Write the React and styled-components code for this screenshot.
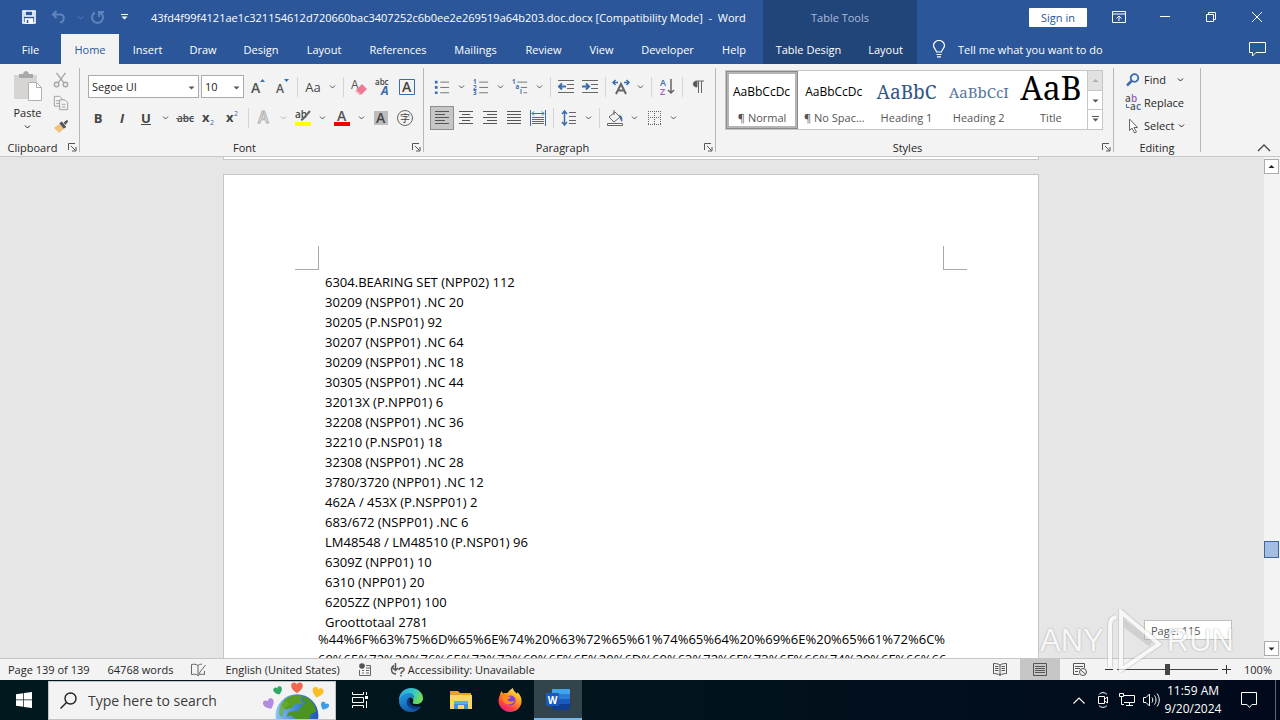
import React from 'react';
import styled, { createGlobalStyle } from 'styled-components';

const GlobalStyle = createGlobalStyle`
    * {
        box-sizing: border-box;
    }
    body {
        margin: 0;
        font-family: "Open Sans", "Noto Sans", sans-serif;
        font-size: 12px;
        color: #262626;
        overflow: hidden;
    }
    button, input, select {
        font: inherit;
        color: inherit;
        margin: 0;
        padding: 0;
        border: 0;
        background: none;
        border-radius: 0;
    }
    svg {
        display: block;
        flex: none;
    }
`;

const Window = styled.div`
    position: relative;
    height: 100vh;
    display: flex;
    flex-direction: column;
    overflow: hidden;
`;

/* header */

const Header = styled.header`
    display: flex;
    background-color: #2b579a;
    color: white;
    white-space: nowrap;
`;

const HeaderPart = styled.div`
    flex: ${(p) => (p.$grow ? '1' : 'none')};
    background-color: ${(p) => (p.$dark ? '#224579' : 'transparent')};
`;

const TitleRow = styled.div`
    height: 34px;
    display: flex;
    align-items: center;
    justify-content: ${(p) => p.$justify || 'flex-start'};
    font-size: 11px;
    color: ${(p) => (p.$dim ? '#a9bcd9' : 'white')};
`;

const QuickAccess = styled.div`
    display: flex;
    align-items: center;
    padding-left: 17px;
    margin-right: 12px;
`;

const QuickButton = styled.button`
    width: ${(p) => p.$width || 24}px;
    height: 24px;
    display: flex;
    align-items: center;
    justify-content: center;
    color: ${(p) => (p.$off ? '#5f83bb' : 'white')};
`;

const WindowTitle = styled.h1`
    margin: 0;
    font-size: 11px;
    font-weight: 400;
`;

const TabRow = styled.div`
    height: 30px;
    display: flex;
    align-items: center;
    padding-right: ${(p) => p.$right || 0}px;
`;

const Tab = styled.button`
    width: ${(p) => p.$width}px;
    height: 30px;
    font-size: 11px;
    text-align: center;
    background-color: ${(p) => (p.$active ? '#f3f3f3' : 'transparent')};
    color: ${(p) => (p.$active ? '#2b579a' : 'white')};
`;

const SignIn = styled.button`
    width: 58px;
    height: 19px;
    margin-right: 9px;
    background-color: white;
    color: #2b579a;
    border-radius: 1px;
    line-height: 19px;
`;

const CaptionButton = styled.button`
    width: 46px;
    height: 30px;
    display: flex;
    align-items: center;
    justify-content: center;
`;

const TellMe = styled.label`
    flex: 1;
    display: flex;
    align-items: center;
    gap: 12px;
    padding-left: 15px;
`;

const TellMeInput = styled.input`
    width: 200px;
    font-size: 11px;
    outline: none;
    &::placeholder {
        color: white;
        opacity: 1;
    }
`;

/* ribbon */

const Ribbon = styled.section`
    display: flex;
    height: 93px;
    padding: 4px 0;
    background-color: #f3f3f3;
    border-bottom: 1px solid #c8c8c8;
    white-space: nowrap;
`;

const Group = styled.div`
    width: ${(p) => p.$width}px;
    display: flex;
    flex-direction: column;
    border-right: 1px solid #b8b8b8;
`;

const GroupBody = styled.div`
    flex: 1;
    display: flex;
    flex-direction: ${(p) => (p.$column ? 'column' : 'row')};
    padding: ${(p) => p.$pad || '0 6px'};
`;

const GroupFooter = styled.div`
    display: flex;
    align-items: center;
    height: 10px;
`;

const GroupName = styled.div`
    flex: 1;
    font-size: 11px;
    text-align: center;
`;

const Launcher = styled.button`
    width: 14px;
    height: 14px;
    display: flex;
    align-items: center;
    justify-content: center;
`;

const ToolRow = styled.div`
    display: flex;
    align-items: center;
    height: 31px;
    padding-left: ${(p) => p.$lead || 0}px;
`;

const Tool = styled.button`
    width: 24px;
    height: 24px;
    display: flex;
    align-items: center;
    justify-content: center;
    color: #444;
    font-size: 13px;
    background-color: ${(p) => (p.$on ? '#c6c6c6' : 'transparent')};
    border: ${(p) => (p.$on ? '1px solid #8f8f8f' : '0')};
`;

const DropButton = styled.button`
    width: 15px;
    height: 24px;
    display: flex;
    align-items: center;
    justify-content: center;
    color: ${(p) => (p.$off ? '#b5b5b5' : '#555')};
`;

const Divider = styled.span`
    width: 1px;
    height: 20px;
    margin: 0 3px;
    background-color: #d5d5d5;
`;

const Combo = styled.div`
    position: relative;
    width: ${(p) => p.$width}px;
    height: 23px;
    margin-right: 2px;
    border: 1px solid #ababab;
    background-color: white;
    color: #555;
    svg {
        position: absolute;
        right: 3px;
        top: 8px;
        pointer-events: none;
    }
`;

const ComboSelect = styled.select`
    width: 100%;
    height: 21px;
    padding-left: 3px;
    font-size: 11px;
    color: #262626;
    appearance: none;
    outline: none;
`;

const PasteButton = styled.button`
    width: 46px;
    display: flex;
    flex-direction: column;
    align-items: center;
    gap: 3px;
    padding-top: 3px;
    font-size: 11px;
`;

const IconColumn = styled.div`
    display: flex;
    flex-direction: column;
    justify-content: space-between;
    height: 70px;
`;

const Gallery = styled.div`
    flex: 1;
    display: flex;
    height: 60px;
    margin-top: 2px;
    border: 1px solid #c6c6c6;
    background-color: white;
`;

const StyleCell = styled.button`
    flex: 1;
    min-width: 0;
    display: flex;
    flex-direction: column;
    justify-content: space-between;
    overflow: hidden;
    padding: 0 2px;
    border: 3px solid ${(p) => (p.$on ? '#b5b5b5' : 'white')};
    outline: ${(p) => (p.$on ? '1px solid #8a8a8a' : '0')};
    outline-offset: -1px;
`;

const StyleSample = styled.span`
    width: 100%;
    height: 36px;
    overflow: hidden;
    padding-left: ${(p) => (p.$serif ? 0 : 2)}px;
    text-align: ${(p) => (p.$serif ? 'center' : 'left')};
    font-family: ${(p) => (p.$serif ? '"Noto Serif", "Liberation Serif", serif' : 'inherit')};
    font-size: ${(p) => p.$size}px;
    line-height: ${(p) => p.$line || 36}px;
    color: ${(p) => p.$color || 'black'};
`;

const StyleName = styled.span`
    width: 100%;
    font-size: 11px;
    line-height: 16px;
    text-align: center;
    color: #555;
`;

const GalleryScroll = styled.div`
    width: 15px;
    display: flex;
    flex-direction: column;
    border-left: 1px solid #c6c6c6;
`;

const GalleryButton = styled.button`
    flex: 1;
    display: flex;
    align-items: center;
    justify-content: center;
    background-color: ${(p) => (p.$off ? '#e1e1e1' : 'white')};
    color: ${(p) => (p.$off ? '#b0b0b0' : '#555')};
    & + & {
        border-top: 1px solid #c6c6c6;
    }
`;

const EditButton = styled.button`
    height: 23px;
    display: flex;
    align-items: center;
    gap: 3px;
    font-size: 11px;
    svg:last-child {
        margin-left: ${(p) => p.$gap || 0}px;
    }
`;

const Collapse = styled.div`
    flex: 1;
    display: flex;
    align-items: flex-end;
    justify-content: flex-end;
    padding: 0 9px 0 0;
`;

/* document */

const Workspace = styled.main`
    flex: 1;
    min-height: 0;
    display: flex;
    background-color: #e6e6e6;
`;

const Canvas = styled.div`
    flex: 1;
    overflow: hidden;
    display: flex;
    flex-direction: column;
    align-items: center;
    padding-right: 2px;
`;

const Sheet = styled.article`
    flex: none;
    width: 816px;
    min-height: ${(p) => (p.$tail ? 3 : 1056)}px;
    padding-top: ${(p) => (p.$tail ? 0 : 71)}px;
    margin-bottom: 14px;
    background-color: white;
    border: 1px solid #c6c6c6;
    border-top-width: ${(p) => (p.$tail ? 0 : 1)}px;
    color: black;
    font-size: 13px;
    line-height: 20px;
`;

const Corners = styled.div`
    display: flex;
    justify-content: space-between;
    padding: 0 71px;
`;

const Corner = styled.span`
    width: 24px;
    height: 24px;
    border-bottom: 1px solid #a8a8a8;
    border-left: ${(p) => (p.$right ? '1px solid #a8a8a8' : '0')};
    border-right: ${(p) => (p.$right ? '0' : '1px solid #a8a8a8')};
`;

const Lines = styled.div`
    padding: 2px 94px 0 101px;
    p {
        margin: 0;
    }
`;

const Encoded = styled.p`
    margin: -3px 90px 0 94px;
    white-space: pre;
`;

const ScrollBar = styled.div`
    width: 16px;
    display: flex;
    flex-direction: column;
    align-items: flex-start;
    padding: 2px 0;
    background-color: #f3f3f3;
`;

const ScrollArrow = styled.button`
    width: 15px;
    height: 15px;
    display: flex;
    align-items: center;
    justify-content: center;
    border: 1px solid #ababab;
    background-color: white;
`;

const ScrollTrack = styled.div`
    flex: 1;
    width: 15px;
    display: flex;
    flex-direction: column;
    justify-content: flex-end;
    padding-bottom: 83px;
`;

const ScrollThumb = styled.div`
    height: 17px;
    border: 1px solid #41669f;
    background-color: #a3bde3;
`;

const PageTip = styled.div`
    position: absolute;
    right: 48px;
    bottom: 80px;
    width: 88px;
    height: 20px;
    padding-left: 6px;
    border: 1px solid #c0c0c0;
    background-color: white;
    font-size: 11px;
    line-height: 19px;
    color: #555;
`;

const Watermark = styled.div`
    position: absolute;
    right: 46px;
    bottom: 45px;
    width: 194px;
    height: 68px;
    display: flex;
    align-items: center;
    justify-content: space-between;
    opacity: 0.7;
    pointer-events: none;
    font-family: "Liberation Sans", sans-serif;
    font-size: 31px;
    color: white;
    text-shadow: 0 0 2px #888;
`;

/* status bar */

const StatusBar = styled.footer`
    display: flex;
    align-items: center;
    height: 22px;
    padding: 0 8px;
    border-top: 1px solid #c6c6c6;
    background-color: #f3f3f3;
    font-size: 11px;
    white-space: nowrap;
`;

const StatusItem = styled.button`
    display: flex;
    align-items: center;
    gap: 2px;
    height: 21px;
    margin-right: 18px;
`;

const Spacer = styled.div`
    flex: 1;
`;

const ViewButton = styled.button`
    width: 40px;
    height: 21px;
    display: flex;
    align-items: center;
    justify-content: center;
    color: #555;
    background-color: ${(p) => (p.$on ? '#c6c6c6' : 'transparent')};
`;

const ZoomStep = styled.button`
    width: 17px;
    height: 21px;
    display: flex;
    align-items: center;
    justify-content: center;
`;

const ZoomRange = styled.input`
    width: 101px;
    height: 21px;
    appearance: none;
    background: linear-gradient(#444, #444) center / 100% 1px no-repeat;
    &::-webkit-slider-thumb {
        appearance: none;
        width: 5px;
        height: 11px;
        background-color: #444;
    }
`;

const ZoomValue = styled.button`
    width: 37px;
    text-align: right;
`;

/* taskbar */

const TaskBar = styled.nav`
    display: flex;
    align-items: center;
    height: 40px;
    background: linear-gradient(90deg, #02181f, #02141d 50%, #010a1c);
    color: white;
`;

const TaskButton = styled.button`
    width: ${(p) => p.$width || 49}px;
    height: 40px;
    display: flex;
    align-items: center;
    justify-content: center;
    background-color: ${(p) => (p.$on ? '#33444d' : 'transparent')};
    border-bottom: ${(p) => (p.$on ? '2px solid #76b9ed' : '0')};
`;

const SearchBox = styled.label`
    width: 288px;
    height: 39px;
    display: flex;
    align-items: center;
    gap: 11px;
    padding: 0 5px 0 11px;
    overflow: hidden;
    border: 1px solid #bfc3c4;
    background-color: #f3f3f3;
    color: #222;
`;

const SearchInput = styled.input`
    flex: 1;
    min-width: 0;
    font-size: 14px;
    outline: none;
    &::placeholder {
        color: #3c3c3c;
        opacity: 1;
    }
`;

const Clock = styled.button`
    width: 60px;
    line-height: 18px;
    text-align: center;
    white-space: nowrap;
`;

const DesktopEdge = styled.button`
    width: 5px;
    height: 40px;
    border-left: 1px solid #5f6a73;
`;

const ChevronIcon = ({ size = 7 }) => (
    <svg width={size} height={size} viewBox="0 0 7 7" fill="none" stroke="currentColor">
        <path d="M1 2.5 3.5 5 6 2.5" />
    </svg>
);

const ArrowIcon = ({ up, bar }) => (
    <svg width="7" height="7" viewBox="0 0 7 7" fill="currentColor">
        {bar && <path d="M0 0h7v1H0z" />}
        <path d={up ? 'M0.5 5 3.5 2l3 3z' : 'M0.5 2.5h6l-3 3z'} />
    </svg>
);

const Glyph = ({ size = 18, children }) => (
    <svg
        width={size}
        height={size}
        viewBox="0 0 18 18"
        fill="none"
        stroke="#666"
        fontFamily="Open Sans, sans-serif"
        overflow="visible"
    >
        {children}
    </svg>
);

const LauncherIcon = () => (
    <svg width="9" height="9" viewBox="0 0 9 9" fill="none" stroke="#555">
        <path d="M.5 7V.5H7M3 3l4.5 4.5M8 4v4H4" />
    </svg>
);

const AlignIcon = ({ widths, start = 'left' }) => (
    <svg width="14" height="13" viewBox="0 0 14 13" fill="#555">
        {widths.map((w, i) => (
            <rect
                key={i}
                x={start === 'left' ? 0 : start === 'right' ? 14 - w : (14 - w) / 2}
                y={i * 3}
                width={w}
                height="1"
            />
        ))}
    </svg>
);

const ListIcon = ({ numbered }) => (
    <Glyph size={16}>
        <path d="M7 3.5h10M7 9.5h10M7 15.5h10" />
        {numbered ? (
            <g fill="#3b6cae" stroke="none" fontSize="7" fontWeight="700">
                <text x="0" y="6">1</text>
                <text x="0" y="12">2</text>
                <text x="0" y="18">3</text>
            </g>
        ) : (
            <path d="M1 2h3v3H1zM1 8h3v3H1zM1 14h3v3H1z" fill="#3b6cae" stroke="none" />
        )}
    </Glyph>
);

const IndentIcon = ({ right }) => (
    <Glyph>
        <path d="M1 2.5h16M10 6.5h7M10 10.5h7M1 14.5h16" />
        <path
            d={right ? 'M1 8.5h7M5 5.5l3 3-3 3' : 'M2 8.5h7M5 5.5l-3 3 3 3'}
            stroke="#3b6cae"
            strokeWidth="2"
        />
    </Glyph>
);

const SaveIcon = () => (
    <svg width="16" height="16" viewBox="0 0 16 16" fill="none" stroke="white" strokeWidth="1.6">
        <path d="M2 2h12v12H2z" />
        <path d="M4 2v5h8V2" />
        <path d="M4.5 10h7v4h-7z" fill="white" />
        <path d="M6.5 11v3" stroke="#2b579a" />
    </svg>
);

const ReplaceIcon = () => (
    <svg width="16" height="18" viewBox="0 0 16 18" fontFamily="Open Sans, sans-serif" fontSize="10" fontWeight="600" overflow="visible">
        <text x="0" y="8" fill="#555">a</text>
        <text x="6" y="8" fill="#9a5fb8">b</text>
        <text x="5" y="16" fill="#555">a</text>
        <text x="11" y="16" fill="#3b6cae">c</text>
        <path d="M1.5 10v3.5h3" fill="none" stroke="#3b6cae" />
    </svg>
);

const EarthIcon = () => (
    <svg width="68" height="38" viewBox="0 0 70 38">
        <defs>
            <linearGradient id="sea" x1="0" x2="1">
                <stop offset="0" stopColor="#8cc4f8" />
                <stop offset="0.5" stopColor="#3f86dd" />
                <stop offset="1" stopColor="#2458b8" />
            </linearGradient>
            <path id="heart" d="M6 11C2 8 0 6 0 3.3 0 1 1.4 0 3 0c1.4 0 2.4.7 3 2 .6-1.3 1.6-2 3-2 1.6 0 3 1 3 3.3C12 6 10 8 6 11z" />
        </defs>
        <circle cx="36" cy="35" r="22" fill="url(#sea)" />
        <path d="M23 19c5-5 13-6 18-4l-2 4 4 3-5 2-3-2-4 5-7 2-4-4z" fill="#5a9f24" />
        <path d="M42 15c8 2 13 9 14 16l-5 2-3 6H36l-6-4-5 1 3-5 9-1 5-6 4-2-5-3z" fill="#4b9420" />
        <path d="M20 22l5-2 3 3-5 5-2 9-3-2c-1-5 0-9 2-13z" fill="#6aaf35" opacity=".7" />
        <use href="#heart" x="30" y="1" fill="#ef6950" />
        <use href="#heart" transform="translate(11 7) rotate(-18) scale(.75)" fill="#2fa866" />
        <use href="#heart" transform="translate(53 5) rotate(14) scale(.95)" fill="#fbbd24" />
        <use href="#heart" transform="translate(0 21) rotate(-25) scale(.95)" fill="#b18be0" />
        <use href="#heart" transform="translate(62 20) rotate(25) scale(.72)" fill="#3d9be8" />
    </svg>
);

const EdgeIcon = () => (
    <svg width="26" height="26" viewBox="0 0 26 26">
        <defs>
            <linearGradient id="edgeTop" x1="0" y1="0" x2="1" y2="0.4">
                <stop offset="0" stopColor="#2aa5e0" />
                <stop offset="0.6" stopColor="#37c6c8" />
                <stop offset="1" stopColor="#6fdc5c" />
            </linearGradient>
            <linearGradient id="edgeBody" x1="0" y1="0" x2="0.6" y2="1">
                <stop offset="0" stopColor="#1fa0e4" />
                <stop offset="1" stopColor="#1254a5" />
            </linearGradient>
        </defs>
        <path d="M1 13C1 6 6 1 13 1s12 5 12 10c0 4-3 6-7 6-3 0-4-1-3-2 1-2 0-5-4-5-5 0-9 3-10 3z" fill="url(#edgeTop)" />
        <path d="M1 14c1-5 5-8 10-8 4 0 6 3 5 6-1-2-3-2-5-1-4 3-1 9 4 10 3 1 6 0 8-2-2 4-6 6-10 6C6 25 1 20 1 14z" fill="url(#edgeBody)" />
        <path d="M10 12c-3 4 0 9 5 10 3 .6 6-.5 8-3-3 1-9 1-11-3-.7-1.5-.6-3 0-4.500z" fill="#0c3c85" />
    </svg>
);

const FolderIcon = () => (
    <svg width="22" height="20" viewBox="0 0 22 20">
        <path d="M0 1h8l2 2h11v5H0z" fill="#e8a020" />
        <path d="M0 5h22v14H0z" fill="#fbd667" />
        <path d="M4 11h14v8h-4v-4H8v4H4z" fill="#3d93d2" />
        <path d="M4 11h14v3H4z" fill="#5ab0e6" />
    </svg>
);

const FirefoxIcon = () => (
    <svg width="24" height="24" viewBox="0 0 24 24">
        <defs>
            <linearGradient id="fire" x1="0.8" y1="0" x2="0.2" y2="1">
                <stop offset="0" stopColor="#fff04a" />
                <stop offset="0.4" stopColor="#ff9a1f" />
                <stop offset="0.75" stopColor="#ff3c4b" />
                <stop offset="1" stopColor="#e31587" />
            </linearGradient>
        </defs>
        <path d="M2 7c0-2 1-3 2-4 0 1 .5 2 1.5 2.5C7 5 8 5 9 5.3 11 3 13 1 15 0c0 3 3 4 4 6l.5-2C22 7 24 10 23.5 14 23 20 18 24 12 24S.5 19 .5 13C.5 10.5 1 9 2 7z" fill="url(#fire)" />
        <circle cx="12.5" cy="12.5" r="5" fill="#7b3fe0" />
        <path d="M5 8c2-1 4-1 5 .5 2 0 3 0 3 1-1 1-2.500 1-3.500 2 1 2 4 3 7 1-1 4-6 5-9 3-3-2-4-5-2.500-7.500z" fill="#ff8a1c" />
    </svg>
);

const WordIcon = () => (
    <svg width="24" height="21" viewBox="0 0 24 21">
        <path d="M6 0h17a1 1 0 0 1 1 1v5H6z" fill="#41a5ee" />
        <path d="M6 5h18v6H6z" fill="#2b7cd3" />
        <path d="M6 10h18v5H6z" fill="#185abd" />
        <path d="M6 15h18v5a1 1 0 0 1-1 1H7a1 1 0 0 1-1-1z" fill="#103f91" />
        <rect y="4" width="13" height="13" rx="1" fill="#185abd" />
        <text x="6.5" y="14.5" fill="white" fontSize="10" fontWeight="700" textAnchor="middle" fontFamily="Open Sans, sans-serif">W</text>
    </svg>
);

const tabs = [
    ['File', 61],
    ['Home', 58],
    ['Insert', 57],
    ['Draw', 54],
    ['Design', 62],
    ['Layout', 64],
    ['References', 84],
    ['Mailings', 71],
    ['Review', 65],
    ['View', 51],
    ['Developer', 81],
    ['Help', 52],
];

const styleCells = [
    { name: '¶ Normal', sample: 'AaBbCcDc', size: 12, on: true },
    { name: '¶ No Spac...', sample: 'AaBbCcDc', size: 12 },
    { name: 'Heading 1', sample: 'AaBbC', size: 19, serif: true, color: '#2f5586' },
    { name: 'Heading 2', sample: 'AaBbCcI', size: 15, serif: true, color: '#54749c' },
    { name: 'Title', sample: 'AaB', size: 32, serif: true, line: 28 },
];

const bearings = [
    '6304.BEARING SET (NPP02) 112',
    '30209 (NSPP01) .NC 20',
    '30205 (P.NSP01) 92',
    '30207 (NSPP01) .NC 64',
    '30209 (NSPP01) .NC 18',
    '30305 (NSPP01) .NC 44',
    '32013X (P.NPP01) 6',
    '32208 (NSPP01) .NC 36',
    '32210 (P.NSP01) 18',
    '32308 (NSPP01) .NC 28',
    '3780/3720 (NPP01) .NC 12',
    '462A / 453X (P.NSPP01) 2',
    '683/672 (NSPP01) .NC 6',
    'LM48548 / LM48510 (P.NSP01) 96',
    '6309Z (NPP01) 10',
    '6310 (NPP01) 20',
    '6205ZZ (NPP01) 100',
    'Groottotaal 2781',
];

function TopHeader() {
    return (
        <Header>
            <HeaderPart>
                <TitleRow>
                    <QuickAccess>
                        <QuickButton aria-label="Save"><SaveIcon /></QuickButton>
                        <QuickButton aria-label="Undo" $width={34} $off>
                            <svg width="15" height="14" viewBox="0 0 15 14" fill="none" stroke="currentColor" strokeWidth="2">
                                <path d="M5.5 1 2 4.500 5.500 8M2 4.500h7c5 0 5 7 0 8" />
                            </svg>
                        </QuickButton>
                        <QuickButton aria-label="Undo list" $width={10} $off><ChevronIcon /></QuickButton>
                        <QuickButton aria-label="Redo" $width={24} $off>
                            <svg width="15" height="15" viewBox="0 0 15 15" fill="none" stroke="currentColor" strokeWidth="2">
                                <path d="M5 2.500a5.500 5.500 0 1 0 5 0M9 7V2h5" />
                            </svg>
                        </QuickButton>
                        <QuickButton aria-label="Customize" $width={30}><ArrowIcon bar /></QuickButton>
                    </QuickAccess>
                    <WindowTitle>
                        43fd4f99f4121ae1c321154612d720660bac3407252c6b0ee2e269519a64b203.doc.docx [Compatibility Mode]&nbsp; -&nbsp; Word
                    </WindowTitle>
                </TitleRow>
                <TabRow $right={3}>
                    {tabs.map(([name, width]) => (
                        <Tab key={name} $width={width} $active={name === 'Home'}>{name}</Tab>
                    ))}
                </TabRow>
            </HeaderPart>
            <HeaderPart $dark>
                <TitleRow $justify="center" $dim>Table Tools</TitleRow>
                <TabRow>
                    <Tab $width={91}>Table Design</Tab>
                    <Tab $width={63}>Layout</Tab>
                </TabRow>
            </HeaderPart>
            <HeaderPart $grow>
                <TitleRow $justify="flex-end">
                    <SignIn>Sign in</SignIn>
                    <CaptionButton aria-label="Ribbon display options">
                        <svg width="14" height="12" viewBox="0 0 14 12" fill="none" stroke="white">
                            <path d="M.5.5h13v11H.5zM.5 3h13M7 10V5M4.500 7.500 7 5l2.500 2.500" />
                        </svg>
                    </CaptionButton>
                    <CaptionButton aria-label="Minimize">
                        <svg width="10" height="10" viewBox="0 0 10 10" stroke="white"><path d="M0 4.500h10" /></svg>
                    </CaptionButton>
                    <CaptionButton aria-label="Restore">
                        <svg width="10" height="10" viewBox="0 0 10 10" fill="none" stroke="white">
                            <path d="M.5 2.500h7v7h-7zM2.500 2.500v-2h7v7h-2" />
                        </svg>
                    </CaptionButton>
                    <CaptionButton aria-label="Close">
                        <svg width="10" height="10" viewBox="0 0 10 10" stroke="white"><path d="M0 0l10 10M10 0 0 10" /></svg>
                    </CaptionButton>
                </TitleRow>
                <TabRow>
                    <TellMe>
                        <svg width="14" height="18" viewBox="0 0 14 18" fill="none" stroke="white" strokeWidth="1.2">
                            <path d="M4.500 12c0-2-3-3.500-3-6.500a5.500 5 0 0 1 11 0c0 3-3 4.500-3 6.500zM4.500 14.500h5M5 16.800h4" />
                        </svg>
                        <TellMeInput aria-label="Tell me" placeholder="Tell me what you want to do" />
                    </TellMe>
                    <CaptionButton aria-label="Comments">
                        <svg width="17" height="15" viewBox="0 0 17 15" fill="none" stroke="white">
                            <path d="M.5.5h16v10H7L3.500 14v-3.500h-3z" />
                        </svg>
                    </CaptionButton>
                </TabRow>
            </HeaderPart>
        </Header>
    );
}

function Footer({ name, launcher = true }) {
    return (
        <GroupFooter>
            <GroupName>{name}</GroupName>
            {launcher && <Launcher aria-label={name + ' settings'}><LauncherIcon /></Launcher>}
        </GroupFooter>
    );
}

function Drop({ off }) {
    return <DropButton aria-label="More" $off={off}><ChevronIcon /></DropButton>;
}

function ClipboardGroup() {
    return (
        <Group $width={80}>
            <GroupBody>
                <PasteButton>
                    <svg width="30" height="31" viewBox="0 0 30 31">
                        <path d="M1 4h23v24H1z" fill="#d8d4d4" />
                        <path d="M6 3h4c1-4 5-4 6 0h4v4H6z" fill="#a8a8a8" />
                        <path d="M15.500 11.500h8l5 5v13h-13z" fill="white" stroke="#b0b0b0" />
                        <path d="M23.500 11.500v5h5" fill="none" stroke="#b0b0b0" />
                    </svg>
                    Paste
                    <ChevronIcon />
                </PasteButton>
                <IconColumn>
                    <Tool aria-label="Cut">
                        <Glyph size={16}>
                            <g stroke="#a6a6a6" strokeWidth="1.6">
                                <path d="M4 1l8 11M14 1 6 12" />
                                <circle cx="4" cy="14" r="2.5" />
                                <circle cx="14" cy="14" r="2.5" />
                            </g>
                        </Glyph>
                    </Tool>
                    <Tool aria-label="Copy">
                        <Glyph size={16}>
                            <path d="M1.500 1.500h6l3 3v8h-9zM3.500 6.500h4M3.500 9.500h4" stroke="#999" />
                            <path d="M7.500 5.500h6l3 3v8h-9z" fill="#f3f3f3" stroke="#999" />
                            <path d="M10 10.500h4M10 13.500h4" stroke="#999" />
                        </Glyph>
                    </Tool>
                    <Tool aria-label="Format painter">
                        <Glyph size={16}>
                            <path d="M1 11l6-4 5 5-5 5z" fill="#f0c27a" stroke="none" />
                            <path d="M7 6l5 6 3-2-5-6zM12 5l4-3 1 2-3 4z" fill="#555" stroke="none" />
                        </Glyph>
                    </Tool>
                </IconColumn>
            </GroupBody>
            <Footer name="Clipboard" />
        </Group>
    );
}

function FontGroup() {
    return (
        <Group $width={344}>
            <GroupBody $column $pad="3px 0 0 6px">
                <ToolRow $lead={2}>
                    <Combo $width={111}>
                        <ComboSelect aria-label="Font" defaultValue="Segoe UI"><option>Segoe UI</option></ComboSelect>
                        <ArrowIcon />
                    </Combo>
                    <Combo $width={43}>
                        <ComboSelect aria-label="Font size" defaultValue="10"><option>10</option></ComboSelect>
                        <ArrowIcon />
                    </Combo>
                    <Tool aria-label="Grow font">
                        <Glyph>
                            <text x="2" y="15" fontSize="14" fontWeight="600" fill="#555" stroke="none">A</text>
                            <path d="M11 4l2.500-3L16 4z" fill="#3b6cae" stroke="none" />
                        </Glyph>
                    </Tool>
                    <Tool aria-label="Shrink font">
                        <Glyph>
                            <text x="3" y="15" fontSize="12" fontWeight="600" fill="#555" stroke="none">A</text>
                            <path d="M11 1l2.500 3L16 1z" fill="#3b6cae" stroke="none" />
                        </Glyph>
                    </Tool>
                    <Divider />
                    <Tool>Aa</Tool>
                    <Drop />
                    <Divider />
                    <Tool aria-label="Clear formatting">
                        <Glyph>
                            <text x="1" y="11" fontSize="12" fill="#555" stroke="none">A</text>
                            <path d="M6 12l6-6 5 5-6 6z" fill="#ee7a95" stroke="none" />
                            <path d="M6 12l5 5-2 0-4-4z" fill="#f6b6c4" stroke="none" />
                        </Glyph>
                    </Tool>
                    <Tool aria-label="Phonetic guide">
                        <Glyph>
                            <text x="1" y="7" fontSize="8" fontWeight="600" fill="#444" stroke="none">abc</text>
                            <text x="7" y="17" fontSize="12" fontWeight="700" fontStyle="italic" fill="#3b6cae" stroke="none">A</text>
                        </Glyph>
                    </Tool>
                    <Tool aria-label="Character border">
                        <Glyph>
                            <path d="M1.500 1.500h15v15h-15z" stroke="#3b6cae" />
                            <text x="4" y="14" fontSize="14" fontWeight="600" fill="#444" stroke="none">A</text>
                        </Glyph>
                    </Tool>
                </ToolRow>
                <ToolRow>
                    <Tool><b>B</b></Tool>
                    <Tool><b><i>I</i></b></Tool>
                    <Tool><b><u>U</u></b></Tool>
                    <Drop />
                    <Tool aria-label="Strikethrough">
                        <Glyph>
                            <text x="1" y="13" fontSize="10" fontWeight="600" fill="#444" stroke="none">abc</text>
                            <path d="M0 9.500h18" />
                        </Glyph>
                    </Tool>
                    <Tool aria-label="Subscript">
                        <Glyph>
                            <text x="2" y="13" fontSize="13" fontWeight="700" fill="#444" stroke="none">x</text>
                            <text x="10" y="16" fontSize="7" fill="#3b6cae" stroke="none">2</text>
                        </Glyph>
                    </Tool>
                    <Tool aria-label="Superscript">
                        <Glyph>
                            <text x="2" y="13" fontSize="13" fontWeight="700" fill="#444" stroke="none">x</text>
                            <text x="10" y="7" fontSize="7" fill="#3b6cae" stroke="none">2</text>
                        </Glyph>
                    </Tool>
                    <Divider />
                    <Tool aria-label="Text effects">
                        <Glyph>
                            <text x="3" y="14" fontSize="16" fontWeight="600" fill="#f3f3f3" stroke="#b0b0b0">A</text>
                        </Glyph>
                    </Tool>
                    <Drop off />
                    <Tool aria-label="Highlight">
                        <Glyph>
                            <text x="1" y="9" fontSize="10" fontWeight="600" fill="#444" stroke="none">ab</text>
                            <path d="M16 2 9 10l-2 1" strokeWidth="2" />
                            <path d="M1 13h16v4H1z" fill="#ffff00" stroke="none" />
                        </Glyph>
                    </Tool>
                    <Drop />
                    <Tool aria-label="Font color">
                        <Glyph>
                            <text x="4" y="12" fontSize="14" fontWeight="600" fill="#555" stroke="none">A</text>
                            <path d="M1 13h16v4H1z" fill="#f00000" stroke="none" />
                        </Glyph>
                    </Tool>
                    <Drop />
                    <Tool aria-label="Character shading">
                        <Glyph>
                            <path d="M2 2h14v14H2z" fill="#bdbdbd" stroke="none" />
                            <text x="4" y="14" fontSize="14" fontWeight="600" fill="#444" stroke="none">A</text>
                        </Glyph>
                    </Tool>
                    <Tool aria-label="Enclose characters">
                        <Glyph>
                            <circle cx="9" cy="9" r="7.5" />
                            <text x="4" y="13" fontSize="10" fill="#444" stroke="none" fontFamily="Noto Sans CJK JP, sans-serif">字</text>
                        </Glyph>
                    </Tool>
                </ToolRow>
            </GroupBody>
            <Footer name="Font" />
        </Group>
    );
}

function ParagraphGroup() {
    return (
        <Group $width={292}>
            <GroupBody $column $pad="3px 0 0 6px">
                <ToolRow>
                    <Tool aria-label="Bullets"><ListIcon /></Tool>
                    <Drop />
                    <Tool aria-label="Numbering"><ListIcon numbered /></Tool>
                    <Drop />
                    <Tool aria-label="Multilevel list">
                        <Glyph size={16}>
                            <g fill="#3b6cae" stroke="none" fontSize="7" fontWeight="700">
                                <text x="0" y="6">1</text>
                                <text x="4" y="11">a</text>
                                <text x="9" y="17">i</text>
                            </g>
                            <path d="M6 3.500h11M10 9.500h7M13 15.500h4" />
                        </Glyph>
                    </Tool>
                    <Drop />
                    <Divider />
                    <Tool aria-label="Decrease indent"><IndentIcon /></Tool>
                    <Tool aria-label="Increase indent"><IndentIcon right /></Tool>
                    <Divider />
                    <Tool aria-label="Asian layout">
                        <Glyph>
                            <path d="M4 16 9 6l5 10M6 12.500h6" strokeWidth="2" />
                            <path d="M1 4.500h5M12 4.500h5M3.500 2 1 4.500 3.500 7M14.500 2 17 4.500 14.500 7" stroke="#3b6cae" strokeWidth="1.5" />
                        </Glyph>
                    </Tool>
                    <Drop />
                    <Divider />
                    <Tool aria-label="Sort">
                        <Glyph>
                            <text x="2" y="8" fontSize="9" fontWeight="600" fill="#3b6cae" stroke="none">A</text>
                            <text x="2" y="17" fontSize="9" fontWeight="600" fill="#9a5fb8" stroke="none">Z</text>
                            <path d="M13 1v14M10 12l3 3 3-3" strokeWidth="1.5" />
                        </Glyph>
                    </Tool>
                    <Divider />
                    <Tool aria-label="Show marks">
                        <Glyph>
                            <path d="M8 9C3 9 3 3 8 3z" fill="#555" />
                            <path d="M8 3h7M9.500 3v12M12.500 3v12" />
                        </Glyph>
                    </Tool>
                </ToolRow>
                <ToolRow>
                    <Tool aria-label="Align left" $on><AlignIcon widths={[14, 10, 14, 10, 14]} /></Tool>
                    <Tool aria-label="Center"><AlignIcon widths={[14, 8, 14, 8, 14]} start="center" /></Tool>
                    <Tool aria-label="Align right"><AlignIcon widths={[14, 10, 14, 10, 14]} start="right" /></Tool>
                    <Tool aria-label="Justify"><AlignIcon widths={[14, 14, 14, 14, 14]} /></Tool>
                    <Tool aria-label="Distribute">
                        <Glyph>
                            <path d="M1.500 1v16M16.500 1v16M3 4.500h12M5 2.500l-2 2 2 2M13 2.500l2 2-2 2" stroke="#3b6cae" />
                            <path d="M3 8.500h12M3 10.500h12M3 12.500h12M3 14.500h12" />
                        </Glyph>
                    </Tool>
                    <Divider />
                    <Tool aria-label="Line spacing">
                        <Glyph>
                            <path d="M4.500 2v14M2 5l2.500-3L7 5M2 13l2.500 3L7 13" stroke="#3b6cae" strokeWidth="1.5" />
                            <path d="M9 3.500h7M9 7.500h7M9 11.500h7M9 14.500h7" />
                        </Glyph>
                    </Tool>
                    <Drop />
                    <Divider />
                    <Tool aria-label="Shading">
                        <Glyph>
                            <path d="M3 8l6-5 5 5-6 5zM8 1v5" />
                            <path d="M13 6c3 0 4 4 3 7-2-2-2-4-3-7z" fill="#3b6cae" stroke="none" />
                            <path d="M1.500 14.500h15v2h-15z" fill="white" />
                        </Glyph>
                    </Tool>
                    <Drop />
                    <Tool aria-label="Borders">
                        <Glyph>
                            <path d="M3.500 2v13M9.500 2v13M15.500 2v13M3 2.500h13M3 8.500h13M3 15.500h13" strokeDasharray="1 1" />
                        </Glyph>
                    </Tool>
                    <Drop />
                </ToolRow>
            </GroupBody>
            <Footer name="Paragraph" />
        </Group>
    );
}

function StylesGroup() {
    return (
        <Group $width={398}>
            <GroupBody $pad="0 10px 0 9px">
                <Gallery>
                    {styleCells.map((s) => (
                        <StyleCell key={s.name} $on={s.on}>
                            <StyleSample $size={s.size} $serif={s.serif} $color={s.color} $line={s.line}>{s.sample}</StyleSample>
                            <StyleName>{s.name}</StyleName>
                        </StyleCell>
                    ))}
                    <GalleryScroll>
                        <GalleryButton aria-label="Previous row" $off><ArrowIcon up /></GalleryButton>
                        <GalleryButton aria-label="Next row"><ArrowIcon /></GalleryButton>
                        <GalleryButton aria-label="More styles"><ArrowIcon bar /></GalleryButton>
                    </GalleryScroll>
                </Gallery>
            </GroupBody>
            <Footer name="Styles" />
        </Group>
    );
}

function EditingGroup() {
    return (
        <Group $width={87}>
            <GroupBody $column $pad="0 0 0 11px">
                <EditButton $gap={8}>
                    <svg width="16" height="14" viewBox="0 0 16 14" fill="none" stroke="#3b6cae" strokeWidth="1.8">
                        <circle cx="9.5" cy="5" r="3.8" />
                        <path d="M6.500 8 2 12.500" strokeWidth="2.5" />
                    </svg>
                    Find
                    <ChevronIcon />
                </EditButton>
                <EditButton><ReplaceIcon />Replace</EditButton>
                <EditButton $gap={1}>
                    <svg width="16" height="16" viewBox="0 0 16 16" fill="white" stroke="#666">
                        <path d="M4.500 1v11.500L7 10l2.500 5 2-1L9 9.500h3.500z" />
                    </svg>
                    Select
                    <ChevronIcon />
                </EditButton>
            </GroupBody>
            <Footer name="Editing" launcher={false} />
        </Group>
    );
}

function Document() {
    return (
        <Workspace>
            <Canvas>
                <Sheet $tail />
                <Sheet>
                    <Corners><Corner /><Corner $right /></Corners>
                    <Lines>
                        {bearings.map((line) => <p key={line}>{line}</p>)}
                    </Lines>
                    <Encoded>
                        {'%44%6F%63%75%6D%65%6E%74%20%63%72%65%61%74%65%64%20%69%6E%20%65%61%72%6C%\n69%65%72%20%76%65%72%73%69%6F%6E%20%6D%69%63%72%6F%73%6F%66%74%20%6F%66%66'}
                    </Encoded>
                </Sheet>
            </Canvas>
            <ScrollBar>
                <ScrollArrow aria-label="Scroll up"><ArrowIcon up /></ScrollArrow>
                <ScrollTrack><ScrollThumb /></ScrollTrack>
                <ScrollArrow aria-label="Scroll down"><ArrowIcon /></ScrollArrow>
            </ScrollBar>
        </Workspace>
    );
}

function Status() {
    return (
        <StatusBar>
            <StatusItem>Page 139 of 139</StatusItem>
            <StatusItem>64768 words</StatusItem>
            <StatusItem aria-label="Proofing">
                <svg width="16" height="14" viewBox="0 0 16 14" fill="none" stroke="#666">
                    <path d="M7 2.500C5 1 3 1 .5 1.500v10c2.500-.5 4.500-.5 6.500 1V2.500c1-1 2-1.300 4-1.300M7 12.500c2-1.500 4-1.500 6.500-1V8M14.500 2 9 9l-1 2" />
                </svg>
            </StatusItem>
            <StatusItem>English (United States)</StatusItem>
            <StatusItem aria-label="Macro recording">
                <svg width="14" height="14" viewBox="0 0 14 14" fill="none" stroke="#666">
                    <circle cx="4" cy="3" r="2.8" fill="#555" stroke="none" />
                    <path d="M8 2.500h4.500v10h-11V7M8 5h5M4 7.500h2M8 7.500h3M4 10h2M8 10h3" />
                </svg>
            </StatusItem>
            <StatusItem>
                <svg width="16" height="14" viewBox="0 0 16 14" fill="none" stroke="#555" strokeWidth="1.5">
                    <path d="M4 2.500C0 5 1 11 6 11M5.500 0v7M3 5l2.500 2.500L8 5M9 7c0-3 6-3 5 0-1 2-3 1-3 4M11 12v1.500" />
                </svg>
                Accessibility: Unavailable
            </StatusItem>
            <Spacer />
            <ViewButton aria-label="Read mode">
                <svg width="14" height="13" viewBox="0 0 14 13" fill="none" stroke="currentColor">
                    <path d="M7 2C5 .8 3 .5.5.5v10c2.500 0 4.500.5 6.500 1.500 2-1 4-1.500 6.500-1.500V.5C11 .5 9 .8 7 2zM7 2v11M2 3.500h3.500M2 5.500h3.500M2 7.500h3.500M8.500 3.500H12M8.500 5.500H12M8.500 7.500H12" />
                </svg>
            </ViewButton>
            <ViewButton aria-label="Print layout" $on>
                <svg width="14" height="13" viewBox="0 0 14 13" fill="none" stroke="currentColor">
                    <path d="M.5.5h13v12H.5zM2 3.500h10M2 5.500h10M2 7.500h10M2 9.500h10" />
                </svg>
            </ViewButton>
            <ViewButton aria-label="Web layout">
                <svg width="14" height="13" viewBox="0 0 14 13" fill="none" stroke="currentColor">
                    <path d="M6 11.500H.5V.5h11V5M2 3.500h8M2 5.500h5M2 8.500h3" />
                    <circle cx="10" cy="9" r="3.5" />
                    <path d="M7.500 7l5 4" />
                </svg>
            </ViewButton>
            <ZoomStep aria-label="Zoom out"><svg width="9" height="9" viewBox="0 0 9 9" stroke="#333"><path d="M1 4.500h8" /></svg></ZoomStep>
            <ZoomRange type="range" aria-label="Zoom" defaultValue="50" />
            <ZoomStep aria-label="Zoom in"><svg width="9" height="9" viewBox="0 0 9 9" stroke="#333"><path d="M0 4.500h9M4.500 0v9" /></svg></ZoomStep>
            <ZoomValue>100%</ZoomValue>
        </StatusBar>
    );
}

function Tasks() {
    return (
        <TaskBar>
            <TaskButton $width={48} aria-label="Start">
                <svg width="16" height="16" viewBox="0 0 16 16" fill="white">
                    <path d="M0 2.200 7.300 1.200v6.300H0zM8 1l8-1v7.500H8zM0 8.300h7.300v6.400L0 13.700zM8 8.300h8V16l-8-1z" />
                </svg>
            </TaskButton>
            <SearchBox>
                <svg width="17" height="17" viewBox="0 0 17 17" fill="none" stroke="#222" strokeWidth="1.4">
                    <circle cx="10.5" cy="6.5" r="5.5" />
                    <path d="M6.500 10.500.5 16.500" />
                </svg>
                <SearchInput aria-label="Search" placeholder="Type here to search" />
                <EarthIcon />
            </SearchBox>
            <TaskButton aria-label="Task view">
                <svg width="17" height="16" viewBox="0 0 17 16" fill="none" stroke="white">
                    <path d="M.5 0v2.500h11V0M.5 5.500h11v5H.5zM.5 16v-2.500h11V16M14.500 0v3M14.500 9v7" />
                    <path d="M13 4h3v3h-3z" fill="white" stroke="none" />
                </svg>
            </TaskButton>
            <TaskButton $width={51} aria-label="Edge"><EdgeIcon /></TaskButton>
            <TaskButton aria-label="File Explorer"><FolderIcon /></TaskButton>
            <TaskButton aria-label="Firefox"><FirefoxIcon /></TaskButton>
            <TaskButton $width={48} $on aria-label="Word"><WordIcon /></TaskButton>
            <Spacer />
            <TaskButton $width={24} aria-label="Hidden icons">
                <svg width="12" height="7" viewBox="0 0 12 7" fill="none" stroke="white" strokeWidth="1.2"><path d="M.5 6.500 6 1l5.500 5.500" /></svg>
            </TaskButton>
            <TaskButton $width={24} aria-label="Meet now">
                <svg width="12" height="16" viewBox="0 0 12 16" fill="none" stroke="white">
                    <path d="M2 2.500C4 0 8 0 10 2.500M2 13.500c2 2.500 6 2.500 8 0M1.500 4.500h6v7h-6zM7.500 7l3-2v6l-3-2" />
                </svg>
            </TaskButton>
            <TaskButton $width={24} aria-label="Network">
                <svg width="16" height="14" viewBox="0 0 16 14" fill="none" stroke="white">
                    <path d="M5 2.500h10.500v7H5M10.500 9.500v3M7 12.500h7M.5.5h4v3h-4zM2.500 3.500v8H5" />
                </svg>
            </TaskButton>
            <TaskButton $width={24} aria-label="Volume">
                <svg width="17" height="14" viewBox="0 0 17 14" fill="none" stroke="white">
                    <path d="M.5 4.500H3L6.500 1v12L3 9.500H.5zM9 4.500c1 1.500 1 3.500 0 5M11.500 2.500c2 2.500 2 6.500 0 9M14 .5c3 4 3 9 0 13" />
                </svg>
            </TaskButton>
            <Clock>11:59 AM<br />9/20/2024</Clock>
            <TaskButton $width={52} aria-label="Notifications">
                <svg width="16" height="16" viewBox="0 0 16 16" fill="none" stroke="white">
                    <path d="M.5.5h15v12H11l-2.500 3-2.500-3H.5z" />
                </svg>
            </TaskButton>
            <DesktopEdge aria-label="Show desktop" />
        </TaskBar>
    );
}

export default function App() {
    return (
        <Window>
            <GlobalStyle />
            <TopHeader />
            <Ribbon>
                <ClipboardGroup />
                <FontGroup />
                <ParagraphGroup />
                <StylesGroup />
                <EditingGroup />
                <Collapse>
                    <svg width="14" height="9" viewBox="0 0 14 9" fill="none" stroke="#444" strokeWidth="1.3"><path d="M1 8l6-6 6 6" /></svg>
                </Collapse>
            </Ribbon>
            <Document />
            <Status />
            <Tasks />
            <PageTip>Page: 115</PageTip>
            <Watermark>
                <span>ANY</span>
                <svg width="56" height="64" viewBox="0 0 56 64" fill="none" stroke="white" strokeWidth="4">
                    <path d="M14 3v58l38-26zM14 12 44 35M9 8C3 9 3 14 3 20v38" stroke="#aaa" strokeWidth="6" opacity=".5" />
                    <path d="M14 3v58l38-26zM9 8C3 9 3 14 3 20v38" />
                </svg>
                <span>RUN</span>
            </Watermark>
        </Window>
    );
}
